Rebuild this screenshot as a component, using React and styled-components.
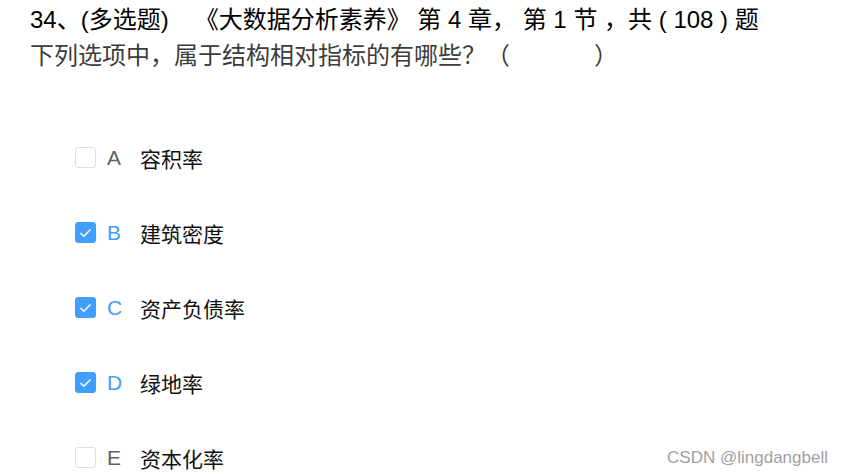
import React from "react";
import styled, { createGlobalStyle } from "styled-components";

const Global = createGlobalStyle`
  html, body { margin: 0; padding: 0; background: #fff; }
  body { font-family: "Liberation Sans", "Noto Sans CJK SC", Arial, sans-serif; }
`;

const Page = styled.div`
  position: relative;
  width: 841px;
  height: 474px;
  overflow: hidden;
  padding: 5px 0 0 30px;
  box-sizing: border-box;
  background: #fff;
`;

const Title = styled.div`
  font-size: 24px;
  line-height: 30px;
  color: #000;
  white-space: pre;
`;

const Gap = styled.span`
  display: inline-block;
  width: ${(p) => p.$w}px;
`;

const Question = styled.div`
  font-family: "Noto Sans CJK SC", sans-serif;
  font-size: 24px;
  line-height: 38px;
  color: #3c3c3c;
  white-space: pre;
`;

const Options = styled.ul`
  list-style: none;
  margin: 47px 0 0 45px;
  padding: 0;
  display: flex;
  flex-direction: column;
`;

const Row = styled.li`
  height: 75px;
  display: flex;
  align-items: center;
`;

const Box = styled.span`
  width: 21px;
  height: 21px;
  box-sizing: border-box;
  border-radius: 3px;
  border: 1px solid ${(p) => (p.$on ? "#409eff" : "#dcdfe6")};
  background: ${(p) => (p.$on ? "#409eff" : "#fff")};
  display: flex;
  align-items: center;
  justify-content: center;
  flex: none;
`;

const Letter = styled.span`
  width: 33px;
  margin-left: 11px;
  font-size: 21px;
  color: ${(p) => (p.$on ? "#409eff" : "#606266")};
`;

const Label = styled.span`
  font-family: "Noto Sans CJK SC", sans-serif;
  font-size: 21px;
  color: #111;
`;

const Mark = styled.div`
  position: absolute;
  right: 13px;
  bottom: 6px;
  font-family: "Liberation Sans", Arial, sans-serif;
  font-size: 17px;
  color: #9f9f9f;
  text-shadow: 0 0 1px #fff;
`;

const options = [
  { k: "A", t: "容积率", on: false },
  { k: "B", t: "建筑密度", on: true },
  { k: "C", t: "资产负债率", on: true },
  { k: "D", t: "绿地率", on: true },
  { k: "E", t: "资本化率", on: false },
];

function Check() {
  return (
    <svg width="13" height="10" viewBox="0 0 13 10">
      <path d="M1.5 5 L4.8 8.3 L11.5 1.5" fill="none" stroke="#fff" strokeWidth="1.5" />
    </svg>
  );
}

export default function App() {
  return (
    <>
      <Global />
      <Page>
        <Title>
          34、(多选题)<Gap $w={26} />《大数据分析素养》 第 4 章， 第 1 节 ，共 ( 108 ) 题
        </Title>
        <Question>
          下列选项中，属于结构相对指标的有哪些？（<Gap $w={84} />）
        </Question>
        <Options>
          {options.map((o) => (
            <Row key={o.k}>
              <Box $on={o.on}>{o.on && <Check />}</Box>
              <Letter $on={o.on}>{o.k}</Letter>
              <Label>{o.t}</Label>
            </Row>
          ))}
        </Options>
        <Mark>CSDN @lingdangbell</Mark>
      </Page>
    </>
  );
}
